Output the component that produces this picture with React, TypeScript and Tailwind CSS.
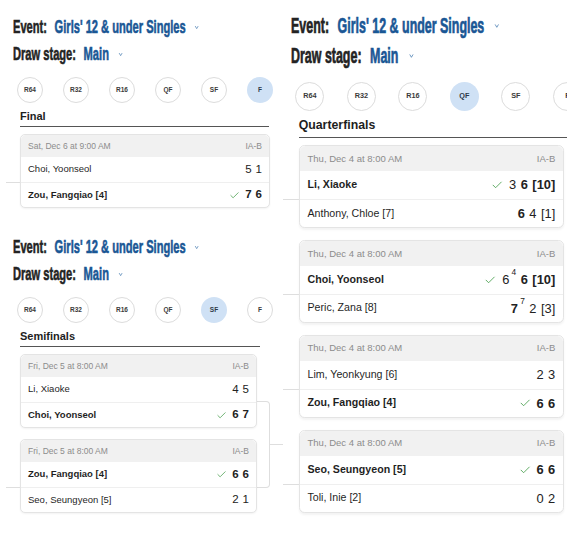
import { Check, ChevronDown } from 'lucide-react';
import clsx from 'clsx';

type Score = { v: string; b?: boolean; sup?: string };
type Player = { name: string; win?: boolean; scores: Score[] };
type Match = { date: string; court: string; players: Player[]; stub?: boolean };

const ROUNDS = ['R64', 'R32', 'R16', 'QF', 'SF', 'F'];

const n = (v: string, sup?: string): Score => ({ v, sup });
const b = (v: string, sup?: string): Score => ({ v, b: true, sup });

const FINAL: Match[] = [
  {
    date: 'Sat, Dec 6 at 9:00 AM',
    court: 'IA-B',
    stub: true,
    players: [
      { name: 'Choi, Yoonseol', scores: [n('5'), n('1')] },
      { name: 'Zou, Fangqiao [4]', win: true, scores: [b('7'), b('6')] },
    ],
  },
];

const SEMIS: Match[] = [
  {
    date: 'Fri, Dec 5 at 8:00 AM',
    court: 'IA-B',
    players: [
      { name: 'Li, Xiaoke', scores: [n('4'), n('5')] },
      { name: 'Choi, Yoonseol', win: true, scores: [b('6'), b('7')] },
    ],
  },
  {
    date: 'Fri, Dec 5 at 8:00 AM',
    court: 'IA-B',
    stub: true,
    players: [
      { name: 'Zou, Fangqiao [4]', win: true, scores: [b('6'), b('6')] },
      { name: 'Seo, Seungyeon [5]', scores: [n('2'), n('1')] },
    ],
  },
];

const QUARTERS: Match[] = [
  {
    date: 'Thu, Dec 4 at 8:00 AM',
    court: 'IA-B',
    stub: true,
    players: [
      { name: 'Li, Xiaoke', win: true, scores: [n('3'), b('6'), b('[10]')] },
      { name: 'Anthony, Chloe [7]', scores: [b('6'), n('4'), n('[1]')] },
    ],
  },
  {
    date: 'Thu, Dec 4 at 8:00 AM',
    court: 'IA-B',
    stub: true,
    players: [
      { name: 'Choi, Yoonseol', win: true, scores: [n('6', '4'), b('6'), b('[10]')] },
      { name: 'Peric, Zana [8]', scores: [b('7', '7'), n('2'), n('[3]')] },
    ],
  },
  {
    date: 'Thu, Dec 4 at 8:00 AM',
    court: 'IA-B',
    stub: true,
    players: [
      { name: 'Lim, Yeonkyung [6]', scores: [n('2'), n('3')] },
      { name: 'Zou, Fangqiao [4]', win: true, scores: [b('6'), b('6')] },
    ],
  },
  {
    date: 'Thu, Dec 4 at 8:00 AM',
    court: 'IA-B',
    stub: true,
    players: [
      { name: 'Seo, Seungyeon [5]', win: true, scores: [b('6'), b('6')] },
      { name: 'Toli, Inie [2]', scores: [n('0'), n('2')] },
    ],
  },
];

// condensed display face: Arial bold squeezed + stroked to the look of the app's heading font
function Filters() {
  return (
    <div className="font-['Liberation_Sans',Arial,sans-serif] font-bold text-[19px] leading-[20px] [-webkit-text-stroke:0.6px_currentColor]">
      <div className="h-[20px]">
        <div className="inline-flex items-center whitespace-nowrap origin-left scale-x-[0.585]">
          <span className="text-[#232323]">Event:</span>
          <span className="ml-[13px] text-[#1a5795]">Girls' 12 &amp; under Singles</span>
          <ChevronDown className="ml-[12px] w-[14px] h-[9px] text-[#2d6aa6]" strokeWidth={2} />
        </div>
      </div>
      <div className="h-[20px] mt-[7px]">
        <div className="inline-flex items-center whitespace-nowrap origin-left scale-x-[0.585]">
          <span className="text-[#232323]">Draw stage:</span>
          <span className="ml-[13px] text-[#1a5795]">Main</span>
          <ChevronDown className="ml-[13px] w-[14px] h-[9px] text-[#2d6aa6]" strokeWidth={2} />
        </div>
      </div>
    </div>
  );
}

function Rounds({ active }: { active: string }) {
  return (
    <div className="flex gap-[20px] ml-[4px] mt-[13px]">
      {ROUNDS.map((r) => (
        <div
          key={r}
          className={clsx(
            'w-[26px] h-[26px] shrink-0 rounded-full flex items-center justify-center text-[6.5px] font-bold',
            r === active ? 'bg-[#cfe1f5] text-[#2d3a48]' : 'border border-[#dcdcdc] bg-white text-[#3a3a3a]'
          )}
        >
          {r}
        </div>
      ))}
    </div>
  );
}

function MatchCard({ m }: { m: Match }) {
  return (
    <div className="relative rounded-[5px] border border-[#e4e4e4] bg-white shadow-[0_1px_2px_rgba(0,0,0,0.05)]">
      {/* connector from previous round */}
      {m.stub && <div className="absolute left-[-15px] top-[47px] w-[14px] h-px bg-[#dedede]" />}
      <div className="h-[22px] px-[7px] flex items-center justify-between bg-[#f1f1f1] rounded-t-[5px] text-[8.5px] text-[#8c8c8c]">
        <span>{m.date}</span>
        <span>{m.court}</span>
      </div>
      {m.players.map((p, i) => (
        <div
          key={p.name}
          className={clsx('h-[25px] px-[7px] flex items-center justify-between', i === 1 && 'border-t border-[#efefef]')}
        >
          <span className={clsx('text-[9.5px] text-[#1f1f1f]', p.win && 'font-bold')}>{p.name}</span>
          <div className="flex items-center gap-[4px] text-[11.5px] text-[#222]">
            {p.win && <Check className="w-[11px] h-[11px] text-[#3f9a45] mr-[1px]" strokeWidth={1.6} />}
            {p.scores.map((s, j) => (
              <span key={j} className={clsx('flex items-start', s.b && 'font-bold')}>
                {s.v}
                {s.sup && <span className="text-[7.5px] font-normal ml-[2px] leading-none mt-[-2px]">{s.sup}</span>}
              </span>
            ))}
          </div>
        </div>
      ))}
    </div>
  );
}

function Panel({
  active,
  title,
  matches,
  wide,
  bracket,
  className,
}: {
  active: string;
  title: string;
  matches: Match[];
  wide?: boolean;
  bracket?: boolean;
  className?: string;
}) {
  return (
    <div className={clsx("font-['Liberation_Sans',Arial,sans-serif]", className)}>
      <Filters />
      <Rounds active={active} />
      <div
        className={clsx(
          'ml-[7px] mt-[6px] pb-[3px] border-b-[1.5px] border-[#555] text-[11px] leading-[14px] font-bold text-[#1e1e1e]',
          wide ? 'w-[249px]' : 'w-[240px]'
        )}
      >
        {title}
      </div>
      <div className={clsx('relative ml-[7px] mt-[7px] flex flex-col gap-[11px]', wide ? 'w-[250px]' : 'w-[237px]')}>
        {bracket && (
          <>
            <div className="absolute left-[237px] top-[47px] w-[13px] h-[87px] border-y border-r border-[#dedede] rounded-r-[4px]" />
            <div className="absolute left-[250px] top-[90px] w-[20px] h-px bg-[#dedede]" />
          </>
        )}
        {matches.map((m, i) => (
          <MatchCard key={i} m={m} />
        ))}
      </div>
    </div>
  );
}

export default function App() {
  return (
    <div className="w-[567px] h-[537px] bg-white flex overflow-hidden">
      {/* Left column: final + semifinals */}
      <div className="w-[283px] shrink-0 flex flex-col overflow-hidden">
        <Panel active="F" title="Final" matches={FINAL} wide className="h-[220px] pt-[17px] pl-[13px]" />
        <Panel active="SF" title="Semifinals" matches={SEMIS} bracket className="pt-[17px] pl-[13px]" />
      </div>

      {/* Right column: quarterfinals, slightly larger screenshot */}
      <div className="w-[284px] shrink-0 overflow-hidden">
        <div className="[zoom:1.12] w-[300px]">
          <Panel active="QF" title="Quarterfinals" matches={QUARTERS} className="pt-[13px] pl-[7px]" />
        </div>
      </div>
    </div>
  );
}
